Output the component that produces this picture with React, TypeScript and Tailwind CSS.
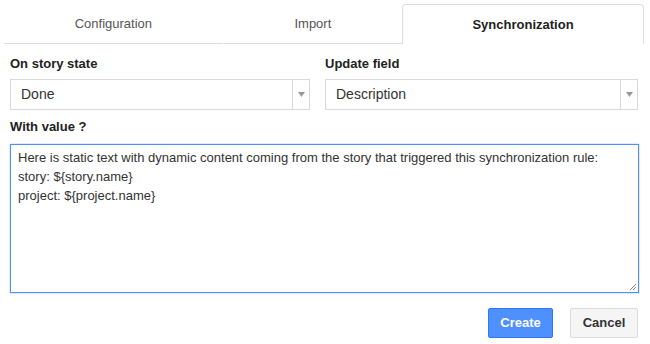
import React from "react";

function Arrow() {
  return (
    <svg width="7" height="5" viewBox="0 0 7 5">
      <path d="M0 0 L7 0 L3.5 5 Z" fill="#9a9a9a" />
    </svg>
  );
}

function Select({ value, width }: { value: string; width: string }) {
  return (
    <div className={`${width} h-[31px] flex border border-[#d9d9d9] bg-white`}>
      <div className="flex-1 flex items-center pl-[10px] text-[14px] text-[#333]">{value}</div>
      <div className="w-[17px] border-l border-[#d9d9d9] flex items-center justify-center">
        <Arrow />
      </div>
    </div>
  );
}

export default function App() {
  return (
    <div
      className="w-[650px] h-[344px] bg-white overflow-hidden"
      style={{ fontFamily: '"Liberation Sans", Arial, sans-serif' }}
    >
      <div className="flex pt-[4px] pl-[4px] pr-[6px]">
        <div className="flex-auto h-[40px] border-b border-[#dedede] flex items-center justify-center text-[13px] text-[#555]">
          Configuration
        </div>
        <div className="flex-auto h-[40px] border-b border-[#dedede] border-l border-l-white flex items-center justify-center text-[13px] text-[#555]">
          Import
        </div>
        <div className="w-[242px] shrink-0 h-[40px] border border-b-0 border-[#dedede] rounded-t-[4px] flex items-center justify-center text-[13px] font-bold text-[#222]">
          Synchronization
        </div>
      </div>
      <div className="pl-[10px] pr-[11px]">
        <div className="flex gap-[15px] mt-[12px]">
          <div>
            <div className="h-[16px] leading-[16px] text-[13px] font-bold text-[#222]">On story state</div>
            <div className="mt-[7px]">
              <Select value="Done" width="w-[300px]" />
            </div>
          </div>
          <div>
            <div className="h-[16px] leading-[16px] text-[13px] font-bold text-[#222]">Update field</div>
            <div className="mt-[7px]">
              <Select value="Description" width="w-[313px]" />
            </div>
          </div>
        </div>
        <div className="mt-[9px] h-[16px] leading-[16px] text-[13px] font-bold text-[#222]">With value ?</div>
        <div className="relative mt-[9px] h-[149px] border border-[#4d90fe] shadow-[0_0_1px_#4d90fe] pl-[7px] pt-[3px] text-[13px] leading-[19px] text-[#333]">
          <div>Here is static text with dynamic content coming from the story that triggered this synchronization rule:</div>
          <div>story: ${"{story.name}"}</div>
          <div>project: ${"{project.name}"}</div>
          <svg className="absolute right-[1px] bottom-[1px]" width="8" height="8" viewBox="0 0 8 8">
            <path d="M7 1 L1 7 M7 4 L4 7" stroke="#888" strokeWidth="1" />
          </svg>
        </div>
        <div className="mt-[15px] mr-[1px] flex justify-end gap-[17px]">
          <button className="w-[65px] h-[30px] rounded-[2px] bg-[#4d90fe] border border-[#3079ed] text-white text-[13px] font-bold">
            Create
          </button>
          <button className="w-[68px] h-[30px] rounded-[2px] bg-[#f5f5f5] border border-[#dcdcdc] text-[#333] text-[13px] font-bold">
            Cancel
          </button>
        </div>
      </div>
    </div>
  );
}
